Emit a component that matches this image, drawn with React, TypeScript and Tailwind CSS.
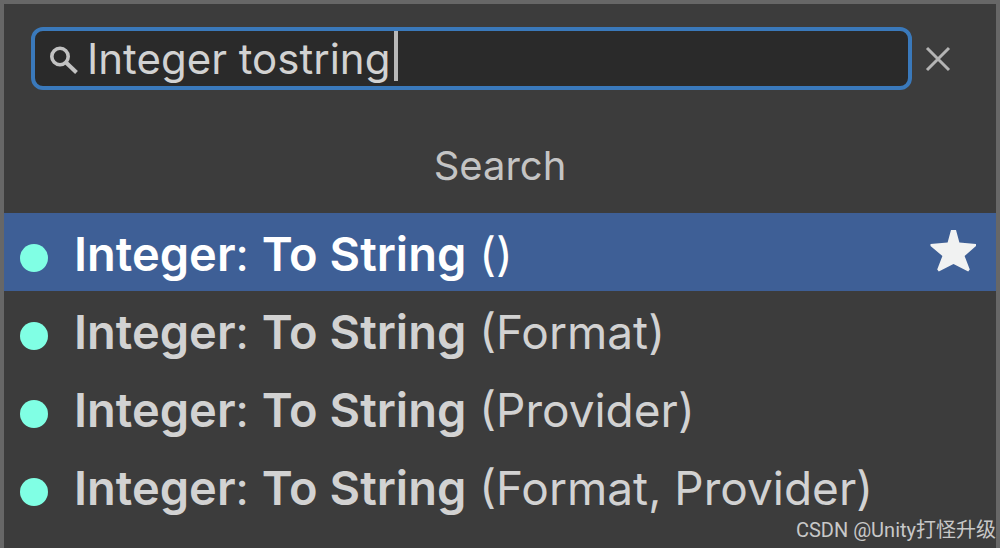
import {useState} from 'react';

interface NodeOption {
    id: string;
    type: string;
    method: string;
    params: string;
}

const options: NodeOption[] = [
    {id: 'default', type: 'Integer', method: 'To String', params: '()'},
    {id: 'format', type: 'Integer', method: 'To String', params: '(Format)'},
    {id: 'provider', type: 'Integer', method: 'To String', params: '(Provider)'},
    {id: 'format-provider', type: 'Integer', method: 'To String', params: '(Format, Provider)'},
];

const SearchIcon = () => (
    <svg className="h-8 w-8 shrink-0" viewBox="0 0 32 32" fill="none" stroke="#c2c2c2" strokeWidth="3.6">
        <circle cx="13" cy="13.5" r="8.2" />
        <path d="M19 19.5l10.5 10" strokeWidth="4" />
    </svg>
);

const ClearIcon = () => (
    <svg className="h-7 w-7" viewBox="0 0 28 28" fill="none" stroke="#b4b4b4" strokeWidth="3">
        <path d="M3 3l22 22M25 3L3 25" />
    </svg>
);

const StarIcon = () => (
    <svg className="h-12 w-12 shrink-0" viewBox="0 0 48 48" fill="#f1f2f2">
        <path d="M23 2h5l3.4 12.6L48 16v2L36.6 28l5.2 13.4-1.6 2L25.5 36 10.8 43.4l-1.6-2L14.4 28 2.5 18v-2l17.1-1.4z" />
    </svg>
);

export default function App() {
    const [query, setQuery] = useState('Integer tostring');
    const [selectedId, setSelectedId] = useState('default');

    return (
        <main className="relative min-h-screen overflow-hidden border-4 border-b-0 border-[#676767] bg-[#3c3c3c] font-[Inter,'Liberation_Sans',sans-serif] text-[#d2d2d2]">
            {/* Search field */}
            <div className="flex items-center gap-3 pt-[23px] pr-11 pl-[27px]">
                <label className="flex h-[63px] min-w-0 flex-1 cursor-text items-center gap-2 rounded-xl border-4 border-[#3a79bb] bg-[#2a2a2a] pl-3">
                    <SearchIcon />
                    <input
                        type="text"
                        aria-label="Search nodes"
                        value={query}
                        onChange={(e) => setQuery(e.target.value)}
                        className="field-sizing-content h-[54px] max-w-full bg-transparent text-[42px] leading-[54px] caret-transparent outline-none"
                    />
                    <span className="-ml-1 h-[50px] w-1 shrink-0 self-start bg-[#b8b8b8]" />
                </label>
                <button type="button" aria-label="Clear" onClick={() => setQuery('')}>
                    <ClearIcon />
                </button>
            </div>

            <h1 className="flex h-[123px] items-center justify-center pt-7 text-[40px] text-[#c4c4c4]">Search</h1>

            {/* Results */}
            <ul>
                {options.map((option) => {
                    const selected = option.id === selectedId;
                    return (
                        <li key={option.id}>
                            <button
                                type="button"
                                onClick={() => setSelectedId(option.id)}
                                className={`flex h-[78px] w-full items-center pr-5 pl-4 text-left text-[46px] ${
                                    selected ? 'bg-[#3e5f96] text-white' : ''
                                }`}
                            >
                                <span className="mt-3 mr-[26px] h-7 w-7 shrink-0 rounded-full bg-[#80ffe4]" />
                                <span className="flex-1 whitespace-nowrap pt-0.5 leading-none">
                                    <span className="text-[47px] leading-none font-semibold">{option.type}</span>:{' '}
                                    <span className="text-[47px] leading-none font-semibold">{option.method}</span>{' '}
                                    {option.params}
                                </span>
                                {selected && <StarIcon />}
                            </button>
                        </li>
                    );
                })}
            </ul>

            <p className="absolute right-0 bottom-1 font-[Roboto,'Noto_Sans_CJK_SC',sans-serif] text-xl leading-7 text-[#c8c8c8]">
                CSDN @Unity打怪升级
            </p>
        </main>
    );
}
